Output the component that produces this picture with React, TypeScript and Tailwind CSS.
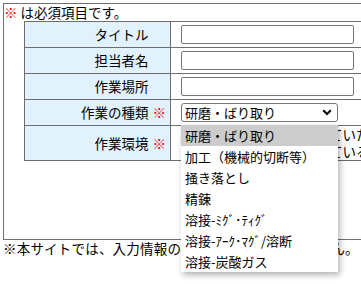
const jp = { fontFamily: '"Noto Sans CJK JP", "Noto Sans", sans-serif' }

const options = [
  "研磨・ばり取り",
  "加工（機械的切断等）",
  "掻き落とし",
  "精錬",
  "溶接-ﾐｸﾞ･ﾃｨｸﾞ",
  "溶接-ｱｰｸ･ﾏｸﾞ/溶断",
  "溶接-炭酸ガス",
]

const Label = ({ text, required }: { text: string; required?: boolean }) => (
  <div className="w-[146px] shrink-0 border-r border-[#6e6e6e] bg-[#e1f2fd] pr-[4px] flex items-center justify-end">
    <span>{text}</span>
    <span className={required ? "ml-[4px] font-bold text-[#ff0000]" : "ml-[4px] font-bold invisible"}>※</span>
  </div>
)

const TextInput = () => (
  <input
    type="text"
    className="w-[173px] h-[19px] border border-[#767676] rounded-[2px] bg-white"
  />
)

export default function App() {
  return (
    <div
      className="w-[361px] h-[284px] overflow-hidden bg-white text-black text-[13.5px]"
      style={jp}
    >
      <div className="ml-[3px] mt-[3px] w-[440px] h-[237px] border border-[#707070]">
        <p className="h-[17px] leading-[17px]">
          <span className="font-bold text-[#ff0000]">※</span> は必須項目です。
        </p>
        <div className="ml-[20px] border-l border-t border-[#6e6e6e]">
          {["タイトル", "担当者名", "作業場所"].map((t) => (
            <div key={t} className="flex h-[26px] border-b border-[#6e6e6e]">
              <Label text={t} />
              <div className="flex-1 pl-[10px] flex items-center">
                <TextInput />
              </div>
            </div>
          ))}
          <div className="flex h-[26px] border-b border-[#6e6e6e]">
            <Label text="作業の種類" required />
            <div className="flex-1 pl-[10px] flex items-center">
              <div className="relative">
                <div className="w-[157px] h-[19px] border border-[#767676] rounded-[3px] bg-white flex items-center justify-between pl-[3px] pr-[4px] text-[13px]">
                  <span className="leading-[17px]">研磨・ばり取り</span>
                  <svg width="10" height="7" viewBox="0 0 10 7" className="mr-[1px]">
                    <path d="M1.2 1.2 5 5 8.8 1.2" fill="none" stroke="#000" strokeWidth="2" />
                  </svg>
                </div>
                <ul className="absolute left-0 top-[22px] z-10 w-[157px] bg-white shadow-[2px_3px_6px_rgba(0,0,0,0.3)] text-[13px]">
                  {options.map((o, i) => (
                    <li
                      key={o}
                      className={
                        i === 0
                          ? "h-[21px] leading-[21px] pl-[4px] bg-[#cccccc]"
                          : "h-[21px] leading-[21px] pl-[4px]"
                      }
                    >
                      {o}
                    </li>
                  ))}
                </ul>
              </div>
            </div>
          </div>
          <div className="flex h-[35px] border-b border-[#6e6e6e]">
            <Label text="作業環境" required />
            <div className="flex-1 pl-[10px] leading-[17px] whitespace-nowrap">
              <p>換気の悪い屋内で作業していた</p>
              <p>換気の良い屋内で作業している</p>
            </div>
          </div>
        </div>
      </div>
      <p className="leading-[17px] pl-[3px] tracking-[0.2px] whitespace-nowrap">
        ※本サイトでは、入力情報の収集・送信は一切しません。
      </p>
    </div>
  )
}
